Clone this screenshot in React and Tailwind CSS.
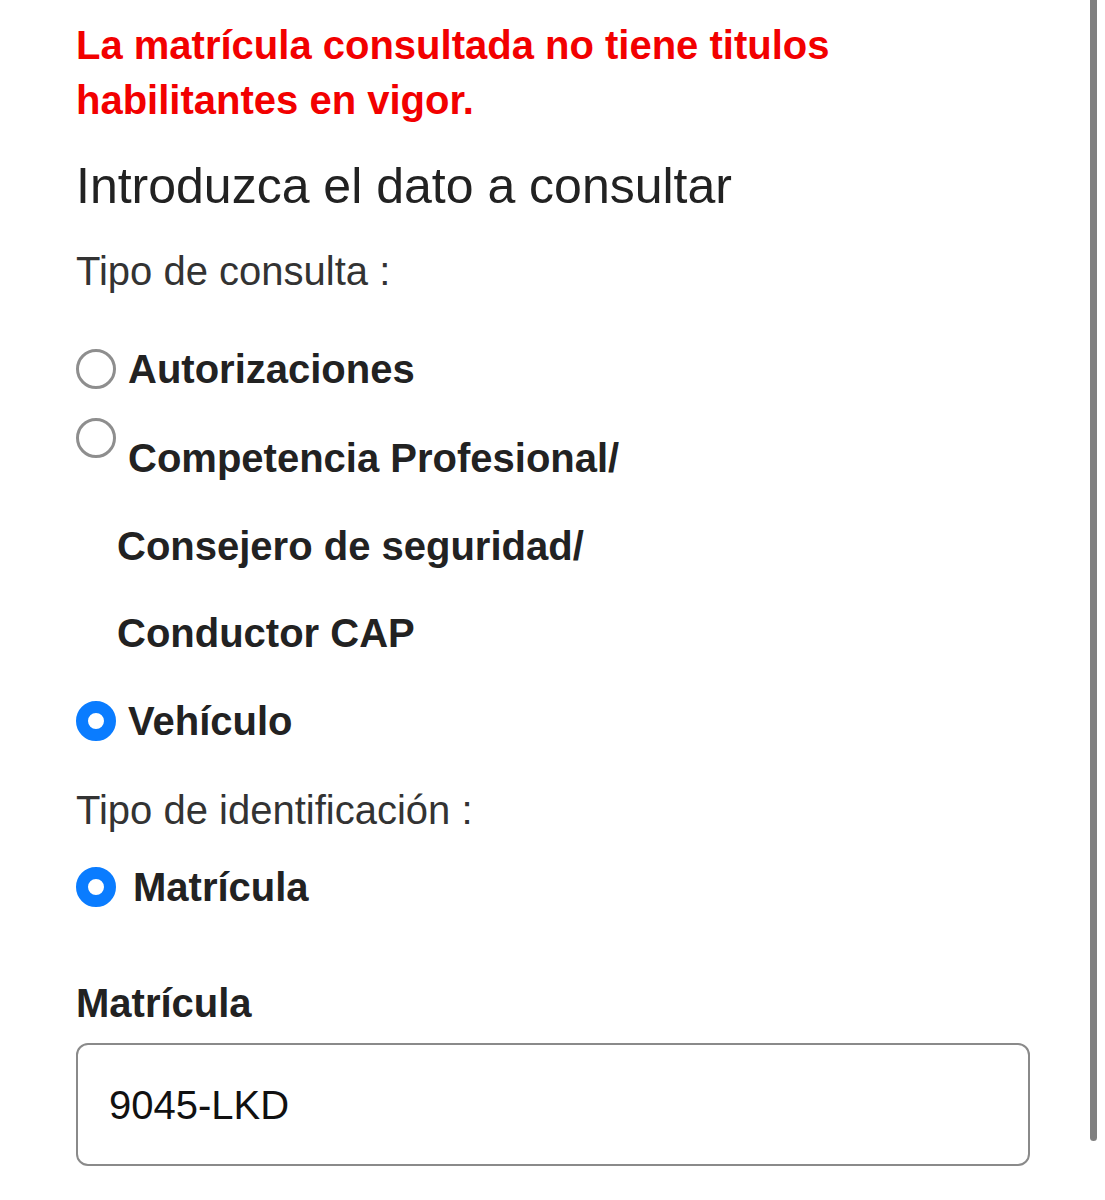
import React from "react";

function Radio({ checked }) {
  return checked ? (
    <span className="inline-block w-[40px] h-[40px] rounded-full border-[12px] border-[#0a7cff] bg-white shrink-0" />
  ) : (
    <span className="inline-block w-[40px] h-[40px] rounded-full border-[3px] border-[#8e8e8e] bg-white shrink-0" />
  );
}

export default function App() {
  return (
    <div className="relative w-[1105px] h-[1200px] bg-white overflow-hidden" style={{ fontFamily: '"Liberation Sans", Arial, sans-serif' }}>
      <div className="absolute right-[8px] top-0 w-[7px] h-[1141px] bg-[#808080] rounded-b-full" />
      <div className="pl-[76px] pr-[76px] pt-[18px]">
        <p className="text-[#f20000] font-bold text-[40px] leading-[55px]">
          La matrícula consultada no tiene titulos
          <br />
          habilitantes en vigor.
        </p>
        <h2 className="mt-[30px] text-[#222] text-[50px] leading-[56px]">Introduzca el dato a consultar</h2>
        <p className="mt-[34px] text-[#333] text-[40px] leading-[46px]">Tipo de consulta :</p>

        <div className="mt-[52px] flex items-center">
          <Radio />
          <span className="ml-[12px] text-[#222] font-bold text-[40px] leading-[46px]">Autorizaciones</span>
        </div>
        <div className="mt-[26px] flex items-start">
          <Radio />
          <span className="ml-[12px] mt-[17px] text-[#222] font-bold text-[40px] leading-[46px]">Competencia Profesional/</span>
        </div>
        <div className="mt-[42px] pl-[41px] text-[#222] font-bold text-[40px] leading-[46px]">Consejero de seguridad/</div>
        <div className="mt-[41px] pl-[41px] text-[#222] font-bold text-[40px] leading-[46px]">Conductor CAP</div>
        <div className="mt-[42px] flex items-center">
          <Radio checked />
          <span className="ml-[12px] text-[#222] font-bold text-[40px] leading-[46px]">Vehículo</span>
        </div>
        <p className="mt-[43px] text-[#333] text-[40px] leading-[46px]">Tipo de identificación :</p>
        <div className="mt-[31px] flex items-center">
          <Radio checked />
          <span className="ml-[17px] text-[#222] font-bold text-[40px] leading-[46px]">Matrícula</span>
        </div>
        <p className="mt-[70px] text-[#222] font-bold text-[40px] leading-[46px]">Matrícula</p>
        <div className="mt-[17px] w-[954px] h-[123px] border-[2px] border-[#8a8a8a] rounded-[12px] flex items-center pl-[31px]">
          <span className="text-[#111] text-[40px]">9045-LKD</span>
        </div>
      </div>
    </div>
  );
}
